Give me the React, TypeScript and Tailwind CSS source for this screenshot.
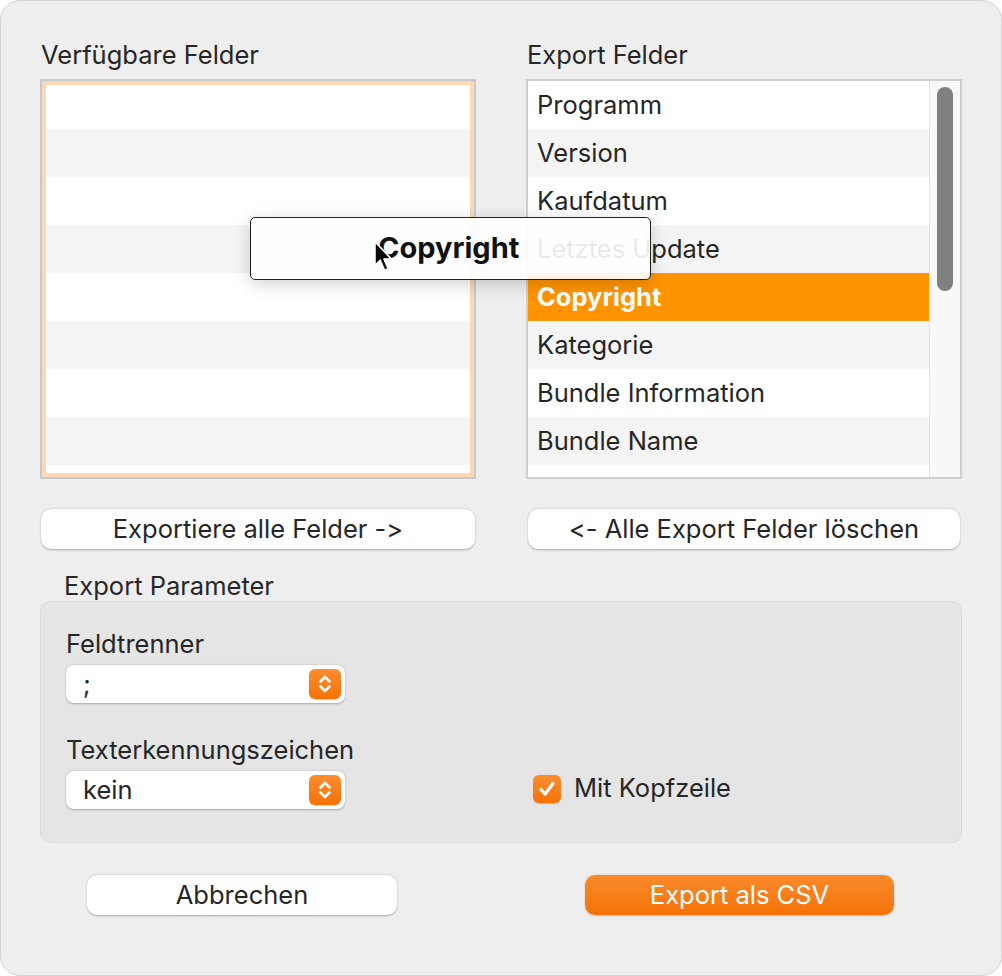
import React from "react";

const font = { fontFamily: "Inter, 'Noto Sans', 'Liberation Sans', sans-serif" };

function StepperIcon() {
  return (
    <svg width="14" height="20" viewBox="0 0 14 20" fill="none">
      <path d="M2.5 7.5 L7 3 L11.5 7.5" stroke="white" strokeWidth="2.6" strokeLinecap="round" strokeLinejoin="round" />
      <path d="M2.5 12.5 L7 17 L11.5 12.5" stroke="white" strokeWidth="2.6" strokeLinecap="round" strokeLinejoin="round" />
    </svg>
  );
}

function Popup({ value }: { value: string }) {
  return (
    <div className="flex h-[38px] w-[279px] items-center justify-between rounded-[8px] bg-white pl-[17px] pr-[4px] shadow-[0_0.5px_2px_rgba(0,0,0,0.28)]">
      <span className="text-[25.5px] leading-none text-[#262626]">{value}</span>
      <div className="flex h-[30px] w-[32px] items-center justify-center rounded-[6px] bg-gradient-to-b from-[#fb8d2e] to-[#f47300] shadow-[0_0.5px_1px_rgba(0,0,0,0.2)]">
        <StepperIcon />
      </div>
    </div>
  );
}

const exportRows = [
  "Programm",
  "Version",
  "Kaufdatum",
  "Letztes Update",
  "Copyright",
  "Kategorie",
  "Bundle Information",
  "Bundle Name",
];

export default function App() {
  return (
    <div className="h-[976px] w-[1002px] bg-white [font-feature-settings:'calt'_0,'liga'_0]" style={font}>
      <div className="relative h-[976px] w-[1002px] overflow-hidden rounded-[20px] border border-[#d2d2d2] bg-[#eeeeee] text-[#262626]">
        <div className="px-[39px] pt-[39px]">
          <div className="flex gap-[50px]">
            {/* Left column */}
            <div className="flex w-[436px] flex-col">
              <div className="h-[30px] pl-[1px] text-[25.5px] leading-[30px]">Verfügbare Felder</div>
              <div className="mt-[9px] h-[400px] border-2 border-[#c9c9c9]">
                <div className="flex h-full flex-col overflow-hidden border-4 border-[#fcd8b7] bg-white">
                  <div className="h-[44px] shrink-0 bg-white" />
                  <div className="h-[48px] shrink-0 bg-[#f4f4f4]" />
                  <div className="h-[48px] shrink-0 bg-white" />
                  <div className="h-[48px] shrink-0 bg-[#f4f4f4]" />
                  <div className="h-[48px] shrink-0 bg-white" />
                  <div className="h-[48px] shrink-0 bg-[#f4f4f4]" />
                  <div className="h-[48px] shrink-0 bg-white" />
                  <div className="h-[48px] shrink-0 bg-[#f4f4f4]" />
                  <div className="h-[48px] shrink-0 bg-white" />
                </div>
              </div>
              <button className="mx-[1px] mt-[30px] flex h-[40px] items-center justify-center rounded-[10px] bg-white text-[25.5px] text-[#262626] shadow-[0_0.5px_2px_rgba(0,0,0,0.3)]">
                Exportiere alle Felder -&gt;
              </button>
            </div>
            {/* Right column */}
            <div className="flex w-[436px] flex-col">
              <div className="h-[30px] pl-[1px] text-[25.5px] leading-[30px]">Export Felder</div>
              <div className="mt-[9px] flex h-[400px] border-2 border-[#d0d0d0] bg-white">
                <div className="flex flex-1 flex-col overflow-hidden">
                  {exportRows.map((r, i) => {
                    const selected = r === "Copyright";
                    return (
                      <div
                        key={r}
                        className={
                          "flex h-[48px] shrink-0 items-center pl-[9px] text-[25.5px] " +
                          (selected
                            ? "bg-[#ff9400] font-bold text-white"
                            : i % 2 === 0
                            ? "bg-white text-[#262626]"
                            : "bg-[#f4f4f4] text-[#262626]")
                        }
                      >
                        {r}
                      </div>
                    );
                  })}
                </div>
                <div className="relative w-[31px] shrink-0 border-l border-[#e2e2e2] bg-[#f8f8f8]">
                  <div className="absolute left-[7px] top-[6px] h-[204px] w-[16px] rounded-full bg-[#808080]" />
                </div>
              </div>
              <button className="ml-[2px] mr-[2px] mt-[30px] flex h-[40px] items-center justify-center rounded-[10px] bg-white text-[25.5px] text-[#262626] shadow-[0_0.5px_2px_rgba(0,0,0,0.3)]">
                &lt;- Alle Export Felder löschen
              </button>
            </div>
          </div>

          <div className="mt-[22px] h-[30px] pl-[24px] text-[25.5px] leading-[30px]">Export Parameter</div>
          <div className="h-[242px] rounded-[10px] border border-[#dadada] bg-[#e5e5e5] pl-[25px] pt-[27px]">
            <div className="h-[30px] text-[25.5px] leading-[30px]">Feldtrenner</div>
            <div className="mt-[6px]">
              <Popup value=";" />
            </div>
            <div className="mt-[32px] flex items-end">
              <div className="flex w-[279px] flex-col">
                <div className="h-[30px] text-[25.5px] leading-[30px]">Texterkennungszeichen</div>
                <div className="mt-[6px]">
                  <Popup value="kein" />
                </div>
              </div>
              <div className="mb-[6px] ml-[188px] flex items-center gap-[13px]">
                <div className="flex h-[28px] w-[28px] items-center justify-center rounded-[6px] bg-gradient-to-b from-[#fb8d2e] to-[#f47300] shadow-[0_0.5px_1px_rgba(0,0,0,0.2)]">
                  <svg width="20" height="20" viewBox="0 0 20 20" fill="none">
                    <path d="M4 10.5 L8.2 15 L16 4.5" stroke="white" strokeWidth="3.2" strokeLinecap="round" strokeLinejoin="round" />
                  </svg>
                </div>
                <span className="-mt-[3px] text-[25.5px] leading-none">Mit Kopfzeile</span>
              </div>
            </div>
          </div>

          <div className="mt-[32px] flex">
            <button className="ml-[47px] flex h-[40px] w-[310px] items-center justify-center rounded-[10px] bg-white text-[25.5px] text-[#262626] shadow-[0_0.5px_2px_rgba(0,0,0,0.3)]">
              Abbrechen
            </button>
            <button className="ml-[188px] flex h-[40px] w-[309px] items-center justify-center rounded-[10px] bg-gradient-to-b from-[#fa8a2a] to-[#f47200] text-[25.5px] text-white shadow-[0_0.5px_2px_rgba(0,0,0,0.2)]">
              Export als CSV
            </button>
          </div>
        </div>

        {/* Drag image */}
        <div className="absolute left-[249px] top-[216px] flex h-[63px] w-[401px] items-center rounded-[5px] border border-[#222] bg-white/90 shadow-[0_4px_18px_rgba(0,0,0,0.18)]">
          <span className="-mt-[3px] ml-[127px] text-[29px] font-bold leading-none text-[#111]">Copyright</span>
        </div>
        <svg className="absolute left-[372px] top-[239px]" width="22" height="34" viewBox="0 0 20 32">
          <path d="M1.5 1.5 L1.5 24 L6.5 19 L10.5 28.5 L14 27 L10 18 L17 18 Z" fill="black" stroke="white" strokeWidth="1.5" strokeLinejoin="round" />
        </svg>
      </div>
    </div>
  );
}
